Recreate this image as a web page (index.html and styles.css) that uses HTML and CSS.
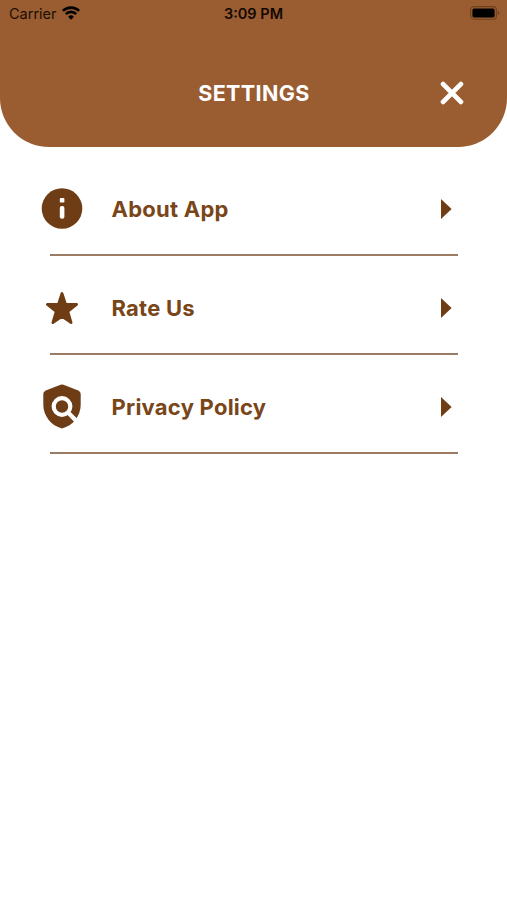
FILE: index.html
```html
<!DOCTYPE html>
<html lang="en">

<head>
	<meta charset="utf-8">
	<title>Settings</title>
	<meta name="viewport" content="width=device-width, initial-scale=1.0">
	<link rel="stylesheet" href="styles.css">
</head>

<body>
	<header class="header">
		<div class="status-bar">
			<div class="carrier">
				<span>Carrier</span>
				<svg class="wifi" width="18" height="14" viewBox="0 0 18 14" fill="none" stroke="currentColor" stroke-width="2.7">
					<path d="M.9 4.9a11.6 11.6 0 0 1 16.2 0M3.8 8.1a7.4 7.4 0 0 1 10.4 0" />
					<path d="M9 13.7 6.1 10.7a4.2 4.2 0 0 1 5.8 0z" fill="currentColor" stroke="none" />
				</svg>
			</div>
			<div class="time">3:09 PM</div>
			<svg class="battery" width="30" height="14" viewBox="0 0 30 14">
				<rect x=".6" y=".6" width="25.8" height="12.6" rx="3.4" fill="none" stroke="#6f401c" stroke-width="1.1" />
				<rect x="2.4" y="2.4" width="22.2" height="9" rx="1.6" fill="#000" />
				<path d="M27.8 4.8c2 .6 2 3.6 0 4.2z" fill="#6f401c" />
			</svg>
		</div>
		<div class="title-bar">
			<h1 class="title">SETTINGS</h1>
			<button class="close" type="button" aria-label="Close">
				<svg width="24" height="24" viewBox="0 0 24 24" stroke="#fff" stroke-width="4.8" stroke-linecap="round">
					<path d="M3.1 3.1l17.8 17.8M20.9 3.1 3.1 20.9" />
				</svg>
			</button>
		</div>
	</header>

	<main class="menu">
		<a class="row">
			<svg class="icon" viewBox="0 0 44 44">
				<circle cx="22" cy="22" r="20.3" />
				<rect x="19.8" y="11.6" width="4.6" height="4.5" rx=".8" fill="#fff" />
				<rect x="19.8" y="19.5" width="4.6" height="12.8" rx="2" fill="#fff" />
			</svg>
			<span class="label">About App</span>
			<svg class="arrow" width="11" height="20" viewBox="0 0 11 20"><path d="M0 0 10.6 10 0 20z" /></svg>
		</a>
		<a class="row">
			<svg class="icon" viewBox="0 0 44 44">
				<path d="M22 8 25.5 18.8 36.6 18.9 27.8 25.9 31.1 37.1 22 30.9 12.9 37.1 16.2 25.9 7.4 18.9 18.5 18.8z" stroke="#6e3d15" stroke-width="2.8" stroke-linejoin="round" />
			</svg>
			<span class="label">Rate Us</span>
			<svg class="arrow" width="11" height="20" viewBox="0 0 11 20"><path d="M0 0 10.6 10 0 20z" /></svg>
		</a>
		<a class="row">
			<svg class="icon" viewBox="0 0 44 44">
				<path d="M20.6.2a4 4 0 0 1 2.8 0L38.3 6.1Q40.7 7.1 40.7 9.6V20.3C40.7 31.3 33 41.3 22 44 11 41.3 3.3 31.3 3.3 20.3V9.6Q3.3 7.1 5.7 6.1z" />
				<circle cx="22" cy="22" r="8.3" fill="none" stroke="#fff" stroke-width="4.2" />
				<path d="M27.5 27.5 36.7 36.7" stroke="#fff" stroke-width="4.4" />
			</svg>
			<span class="label">Privacy Policy</span>
			<svg class="arrow" width="11" height="20" viewBox="0 0 11 20"><path d="M0 0 10.6 10 0 20z" /></svg>
		</a>
	</main>
</body>

</html>
```
FILE: styles.css
```css
body {
	margin: 0;
	background: #fff;
	font-family: Inter, "Liberation Sans", sans-serif;
}

.header {
	box-sizing: border-box;
	height: 147px;
	background: #9a5c31;
	border-radius: 0 0 49px 49px;
}

/* carrier / clock / battery */
.status-bar {
	display: grid;
	grid-template-columns: 1fr auto 1fr;
	align-items: center;
	height: 27px;
	padding: 0 7px 0 9px;
	color: #1c0e05;
	font-size: 14.5px;
}

.carrier {
	display: flex;
	align-items: center;
	gap: 5px;
}

.wifi {
	margin-bottom: 2px;
	color: #000;
}

.time {
	margin-right: 2px;
	font-weight: 600;
	color: #120802;
}

.battery {
	justify-self: end;
	margin-bottom: 1px;
}

.title-bar {
	display: grid;
	grid-template-columns: 1fr auto 1fr;
	align-items: center;
	height: 132px;
	padding: 0 43px;
}

.title {
	grid-column: 2;
	margin: 0 -1px 0 0;
	font-size: 21.5px;
	font-weight: 650;
	letter-spacing: 0.4px;
	color: #fff;
}

.close {
	justify-self: end;
	display: flex;
	padding: 0;
	border: 0;
	background: none;
}

.menu {
	padding: 10px 49px 0 50px;
}

.row {
	box-sizing: border-box;
	display: flex;
	align-items: center;
	height: 99px;
	padding: 6px 6px 0 0;
	border-bottom: 2px solid #9c7b65;
	color: #784619;
}

/* icons stick out a bit to the left of the divider */
.icon {
	width: 44px;
	height: 45px;
	margin-left: -10px;
	fill: #6e3d15;
}

.label {
	flex: 1;
	margin-left: 27.5px;
	font-size: 22px;
	font-weight: 650;
	letter-spacing: 0.25px;
}

.arrow {
	fill: #6e3d15;
}
```
